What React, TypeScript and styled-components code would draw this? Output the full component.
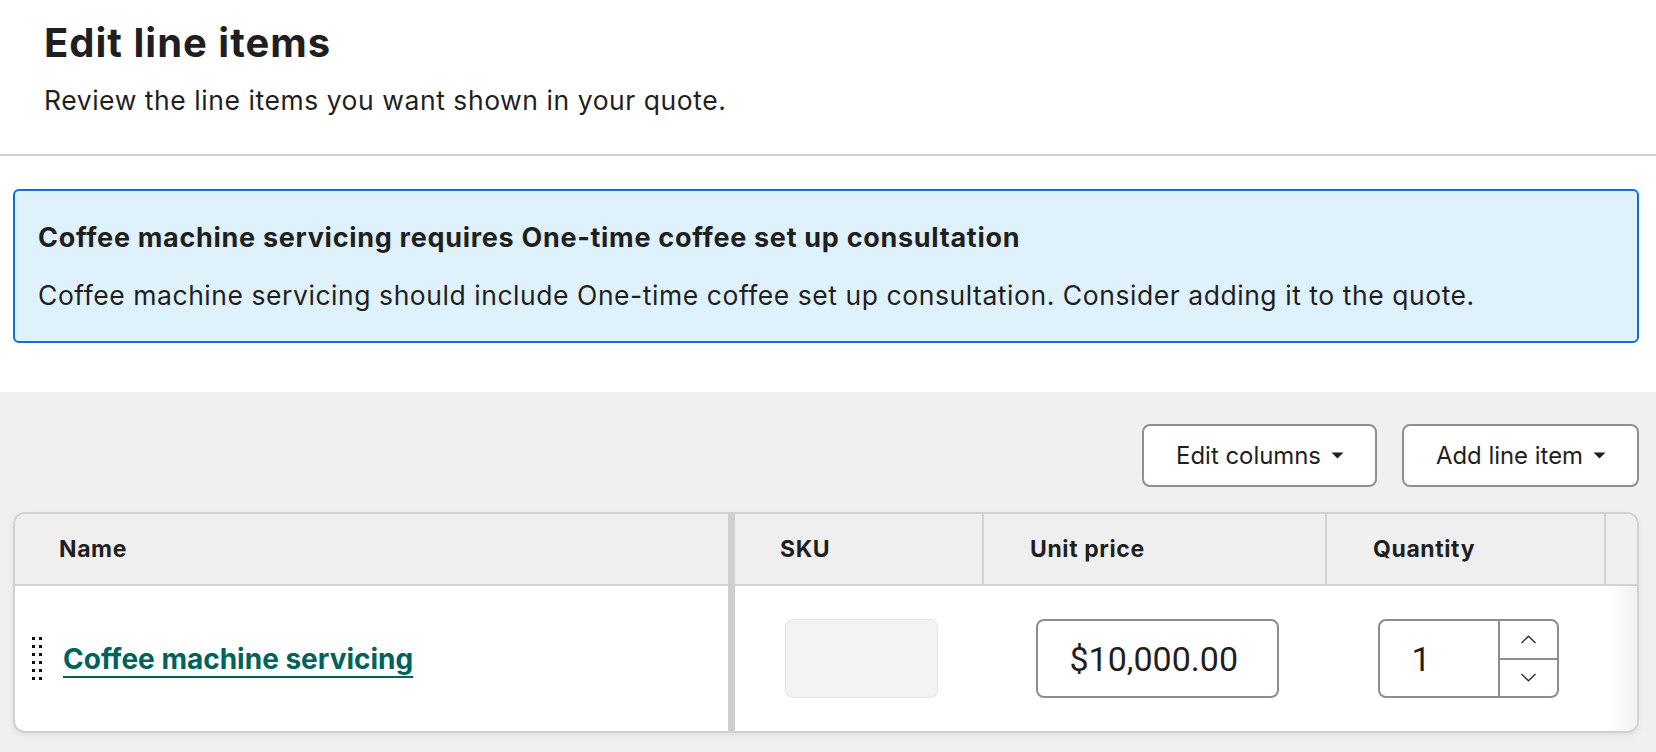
import React from "react";
import styled, { createGlobalStyle } from "styled-components";

const GlobalStyle = createGlobalStyle`
  *, *::before, *::after { box-sizing: border-box; }
  html, body { margin: 0; padding: 0; background: #ffffff; }
  body {
    font-family: "Inter", "DejaVu Sans", sans-serif;
    color: #1f1f1f;
  }
`;

const Page = styled.div`
  display: flex;
  flex-direction: column;
  min-height: 100vh;
`;

const Header = styled.header`
  padding: 20px 44px 38px;
  border-bottom: 2px solid #cfcfcf;
`;

const Title = styled.h1`
  margin: 0;
  font-size: 40px;
  line-height: 46px;
  font-weight: 700;
  letter-spacing: 1px;
`;

const Subtitle = styled.p`
  margin: 18px 0 0;
  font-size: 26.5px;
  line-height: 32px;
  font-weight: 400;
  letter-spacing: 0.55px;
`;

const Alert = styled.section`
  margin: 33px 17px 0 13px;
  padding: 31px 24px 30px 23px;
  border: 2px solid #0d6fd8;
  border-radius: 6px;
  background: #dff1fb;
`;

const AlertTitle = styled.h2`
  margin: 0;
  font-size: 27px;
  line-height: 32px;
  font-weight: 700;
  letter-spacing: 0.7px;
`;

const AlertText = styled.p`
  margin: 25px 0 0;
  font-size: 26.5px;
  line-height: 32px;
  font-weight: 400;
  letter-spacing: 0.55px;
`;

const Workspace = styled.main`
  flex: 1;
  margin-top: 49px;
  padding: 32px 17px 19px 13px;
  background: #f0f0f0;
`;

const Toolbar = styled.div`
  display: flex;
  justify-content: flex-end;
  gap: 25px;
`;

const MenuButton = styled.button`
  display: inline-flex;
  align-items: center;
  justify-content: center;
  gap: 10px;
  height: 63px;
  padding: 0 31px 0 32px;
  border: 2px solid #8f8f8f;
  border-radius: 8px;
  background: #ffffff;
  color: #1f1f1f;
  font-family: inherit;
  font-size: 23.9px;
  line-height: 24px;
  cursor: pointer;
`;

const TableCard = styled.div`
  margin-top: 25px;
  border: 2px solid #d1d1d1;
  border-radius: 12px;
  overflow: hidden;
  background: #ffffff;
  box-shadow: 0 3px 6px rgba(0, 0, 0, 0.06);
`;

const Grid = styled.div`
  display: grid;
  grid-template-columns: 713px 7px 249px 343px 279px 1fr;
  grid-template-rows: 72px 145px;
`;

const HeadCell = styled.div<{ $pad?: number; $rule?: boolean }>`
  display: flex;
  align-items: center;
  padding-left: ${(p) => p.$pad ?? 45}px;
  background: #efefef;
  border-bottom: 2px solid #d3d3d3;
  border-right: ${(p) => (p.$rule ? "2px solid #d3d3d3" : "none")};
  font-size: 23px;
  line-height: 23px;
  font-weight: 700;
  letter-spacing: 0.6px;
`;

const StickyEdge = styled.div`
  grid-column: 2;
  grid-row: 1 / span 2;
  background: #cfcfcf;
`;

const BodyCell = styled.div<{ $fade?: boolean }>`
  display: flex;
  align-items: center;
  justify-content: center;
  padding-left: 3px;
  background: ${(p) =>
    p.$fade ? "linear-gradient(90deg, #ffffff 0%, #ebebeb 100%)" : "#ffffff"};
`;

const NameCell = styled.div`
  display: flex;
  align-items: center;
  gap: 21px;
  padding-left: 17px;
`;

const ItemLink = styled.a`
  color: #00625c;
  font-size: 28px;
  line-height: 28px;
  font-weight: 700;
  text-decoration: underline;
  text-decoration-thickness: 2px;
  text-underline-offset: 7px;
  cursor: pointer;
`;

const SkuField = styled.div`
  width: 153px;
  height: 79px;
  background: #f3f3f3;
  border: 1px solid #e2e2e2;
  border-radius: 8px;
`;

const valueFont = `
  font-family: "Roboto", "Liberation Sans", sans-serif;
  font-size: 34px;
  color: #1f1f1f;
`;

const PriceInput = styled.input`
  width: 243px;
  height: 79px;
  padding: 0 0 0 32px;
  border: 2px solid #8d8d8d;
  border-radius: 8px;
  background: #ffffff;
  outline: none;
  ${valueFont}
`;

const Stepper = styled.div`
  display: flex;
  width: 181px;
  height: 79px;
  border: 2px solid #8d8d8d;
  border-radius: 8px;
  overflow: hidden;
  background: #ffffff;
`;

const StepperValue = styled.input`
  flex: 1;
  min-width: 0;
  padding: 0 0 0 32px;
  border: none;
  outline: none;
  background: transparent;
  ${valueFont}
`;

const StepperArrows = styled.div`
  display: flex;
  flex-direction: column;
  width: 59px;
  border-left: 2px solid #8d8d8d;
`;

const ArrowButton = styled.button`
  flex: 1;
  display: flex;
  align-items: center;
  justify-content: center;
  padding: 0;
  border: none;
  background: transparent;
  cursor: pointer;

  & + & {
    border-top: 2px solid #8d8d8d;
  }
`;

const Caret = () => (
  <svg width="13" height="7" viewBox="0 0 13 7" aria-hidden="true">
    <path d="M0.5 0.5H12.5L6.5 6.5Z" fill="#1f1f1f" />
  </svg>
);

const Chevron = ({ up }: { up?: boolean }) => (
  <svg width="17" height="9" viewBox="0 0 17 9" aria-hidden="true">
    <path
      d={up ? "M1.5 8L8.5 1.2L15.5 8" : "M1.5 1L8.5 7.8L15.5 1"}
      fill="none"
      stroke="#2b2b2b"
      strokeWidth="1.4"
    />
  </svg>
);

const HandleIcon = styled.svg`
  flex: none;
  display: block;
`;

const DragHandle = () => (
  <HandleIcon
    width="10"
    height="43"
    viewBox="0 0 10 43"
    shapeRendering="crispEdges"
    aria-hidden="true"
  >
    {[0, 8, 16, 24, 32, 40].map((y) => (
      <g key={y} fill="#111111">
        <rect x="0" y={y} width="3" height="3" />
        <rect x="7" y={y} width="3" height="3" />
      </g>
    ))}
  </HandleIcon>
);

export default function App() {
  return (
    <>
      <GlobalStyle />
      <Page>
        <Header>
          <Title>Edit line items</Title>
          <Subtitle>Review the line items you want shown in your quote.</Subtitle>
        </Header>

        <Alert>
          <AlertTitle>
            Coffee machine servicing requires One-time coffee set up consultation
          </AlertTitle>
          <AlertText>
            Coffee machine servicing should include One-time coffee set up
            consultation. Consider adding it to the quote.
          </AlertText>
        </Alert>

        <Workspace>
          <Toolbar>
            <MenuButton>
              Edit columns
              <Caret />
            </MenuButton>
            <MenuButton>
              Add line item
              <Caret />
            </MenuButton>
          </Toolbar>

          <TableCard>
            <Grid>
              <StickyEdge />
              <HeadCell $pad={44}>Name</HeadCell>
              <HeadCell $rule>SKU</HeadCell>
              <HeadCell $rule $pad={46}>Unit price</HeadCell>
              <HeadCell $rule $pad={46}>Quantity</HeadCell>
              <HeadCell />

              <NameCell>
                <DragHandle />
                <ItemLink>Coffee machine servicing</ItemLink>
              </NameCell>
              <BodyCell>
                <SkuField />
              </BodyCell>
              <BodyCell>
                <PriceInput readOnly defaultValue="$10,000.00" />
              </BodyCell>
              <BodyCell>
                <Stepper>
                  <StepperValue readOnly defaultValue="1" />
                  <StepperArrows>
                    <ArrowButton aria-label="Increase">
                      <Chevron up />
                    </ArrowButton>
                    <ArrowButton aria-label="Decrease">
                      <Chevron />
                    </ArrowButton>
                  </StepperArrows>
                </Stepper>
              </BodyCell>
              <BodyCell $fade />
            </Grid>
          </TableCard>
        </Workspace>
      </Page>
    </>
  );
}
